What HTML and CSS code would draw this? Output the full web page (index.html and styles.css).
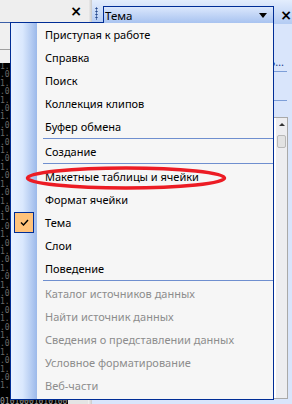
FILE: index.html
```html
<!DOCTYPE html>
<html lang="ru">
<head>
  <meta charset="UTF-8" />
  <title>Тема</title>
  <link rel="stylesheet" href="styles.css">
</head>
<body>
  <div class="screen">
    <div class="pane-left">
      <div class="pane-head"><span class="close">×</span></div>
      <div class="pane-tools"></div>
      <div class="pane-work">
        <div class="binary">
          <div class="bits">1.0
.01
1.0
.01
1.0
.01
1.0
.01
1.0
.01
1.0
.01
1.0
.01
1.0
.01
1.0
.01
1.0
.01
1.0
.01
1.0
.01
1.0
.01
1.0
.01
1.0
.01
1.0
.01
1.0
.01
1.0
.01
1.0
.01
1.0</div>
          <div class="bits-row">0101000101010001010000</div>
        </div>
        <div class="work-side"></div>
      </div>
    </div>

    <div class="splitter"></div>

    <div class="pane-right">
      <div class="task-head">
        <span class="grip"></span>
        <div class="combo">
          <span class="combo-text">Тема</span>
          <span class="combo-arrow"></span>
        </div>
        <span class="close">×</span>
      </div>
      <div class="task-body">
        <div class="task-link">Применить…</div>
        <div class="task-rule"></div>
        <div class="task-rule second"></div>
        <div class="theme-list">
          <div class="theme-preview"></div>
          <div class="scrollbar">
            <span class="scroll-up"></span>
            <span class="scroll-thumb"></span>
          </div>
        </div>
      </div>
    </div>

    <div class="menu">
      <div class="item"><span class="gutter"></span><span class="label">Приступая к работе</span></div>
      <div class="item"><span class="gutter"></span><span class="label">Справка</span></div>
      <div class="item"><span class="gutter"></span><span class="label">Поиск</span></div>
      <div class="item"><span class="gutter"></span><span class="label">Коллекция клипов</span></div>
      <div class="item"><span class="gutter"></span><span class="label">Буфер обмена</span></div>
      <div class="sep"></div>
      <div class="item"><span class="gutter"></span><span class="label">Создание</span></div>
      <div class="sep"></div>
      <div class="item"><span class="gutter"></span><span class="label">Макетные таблицы и ячейки</span></div>
      <div class="item"><span class="gutter"></span><span class="label">Формат ячейки</span></div>
      <div class="item"><span class="gutter"><span class="check">
        <svg width="9" height="7" viewBox="0 0 9 7"><path d="M1 3.5 L3.5 6 L8 1" fill="none" stroke="#000" stroke-width="1.4"/></svg>
      </span></span><span class="label">Тема</span></div>
      <div class="item"><span class="gutter"></span><span class="label">Слои</span></div>
      <div class="item"><span class="gutter"></span><span class="label">Поведение</span></div>
      <div class="sep"></div>
      <div class="item disabled"><span class="gutter"></span><span class="label">Каталог источников данных</span></div>
      <div class="item disabled"><span class="gutter"></span><span class="label">Найти источник данных</span></div>
      <div class="item disabled"><span class="gutter"></span><span class="label">Сведения о представлении данных</span></div>
      <div class="item disabled"><span class="gutter"></span><span class="label">Условное форматирование</span></div>
      <div class="item disabled"><span class="gutter"></span><span class="label">Веб-части</span></div>
    </div>

    <svg class="highlight" width="216" height="30" viewBox="0 0 216 30">
      <ellipse cx="108" cy="15" rx="98.5" ry="10" fill="none" stroke="#ec1c24" stroke-width="3.5"/>
    </svg>
  </div>
</body>
</html>
```

FILE: styles.css
```css
* {
  margin: 0;
  padding: 0;
  box-sizing: border-box;
}

body {
  font-family: "Noto Sans", "Liberation Sans", sans-serif;
  font-size: 11px;
  background: #d9e5fb;
}

.screen {
  position: relative;
  width: 292px;
  height: 404px;
  overflow: hidden;
  display: grid;
  grid-template-columns: 88px 4px 200px;
}

/* left pane */
.pane-left {
  display: flex;
  flex-direction: column;
  background: #f0f0f0;
}

.pane-head {
  height: 23px;
  display: flex;
  justify-content: flex-end;
  align-items: center;
  padding-right: 6px;
  border-bottom: 1px solid #3b5fa8;
  background: #eeeeee;
}

.close {
  font-family: "DejaVu Sans", sans-serif;
  font-size: 14px;
  font-weight: bold;
  line-height: 1;
  color: #000;
}

.pane-tools {
  height: 40px;
  background: linear-gradient(#f0f0f0 0 26px, #a0a0a0 26px 27px, #f0f0f0 27px);
}

.pane-work {
  flex: 1;
  display: flex;
  overflow: hidden;
}

.binary {
  width: 68px;
  display: flex;
  flex-direction: column;
  justify-content: space-between;
  background: #000;
  color: #6a6a6a;
  font-family: "DejaVu Sans Mono", monospace;
  font-size: 8px;
  line-height: 8.4px;
  white-space: pre;
  overflow: hidden;
}

.bits-row {
  height: 6px;
  line-height: 8px;
  color: #9a9a9a;
}

.work-side {
  flex: 1;
  background: #e4e4e4;
}

.splitter {
  background: linear-gradient(to right, #f4f4f4, #c9c9c9);
}

/* right pane */
.pane-right {
  display: flex;
  flex-direction: column;
  background: #d9e5fb;
}

.task-head {
  height: 24px;
  display: flex;
  align-items: flex-start;
  background: linear-gradient(#e3edfd, #b3cbf3);
}

.grip {
  width: 3px;
  height: 13px;
  margin: 7px 0 0 3px;
  background: radial-gradient(circle, #274a8e 0.9px, transparent 1.2px) 0 0 / 3px 3px;
}

.combo {
  position: relative;
  z-index: 3;
  width: 174px;
  height: 17px;
  margin: 6px 0 0 5px;
  padding: 0 4px 0 1px;
  display: flex;
  align-items: center;
  justify-content: space-between;
  border: 1px solid #002d96;
  border-bottom: none;
  background: linear-gradient(#dbe7fc, #a8c3f0);
}

.combo-text {
  font-size: 11.5px;
  color: #000;
}

.combo-arrow {
  width: 0;
  height: 0;
  margin-right: 2px;
  border-left: 4.5px solid transparent;
  border-right: 4.5px solid transparent;
  border-top: 5px solid #000;
}

.task-head .close {
  margin: 8px 0 0 6px;
}

.task-body {
  flex: 1;
  display: flex;
  flex-direction: column;
  padding: 0 5px 0 8px;
}

.task-link {
  margin: 32px 3px 0 0;
  text-align: right;
  color: #1f3f8f;
  font-size: 11px;
  line-height: 12px;
}

.task-rule {
  height: 1px;
  margin-top: 3px;
  background: #7d9ed8;
}

.task-rule.second {
  margin-top: 28px;
}

.theme-list {
  flex: 1;
  display: flex;
  margin: 16px -1px 5px 0;
  border: 1px solid #a9a9a9;
  background: #fff;
}

.theme-preview {
  flex: 1;
}

.scrollbar {
  width: 11px;
  display: flex;
  flex-direction: column;
  align-items: center;
  background: #ededf0;
}

.scroll-up {
  width: 0;
  height: 0;
  margin-top: 5px;
  border-left: 3px solid transparent;
  border-right: 3px solid transparent;
  border-bottom: 3px solid #333;
}

.scroll-thumb {
  width: 9px;
  height: 13px;
  margin-top: 9px;
  border: 1px solid #b9b9b9;
  border-radius: 2px;
  background: #e2e2e2;
}

/* dropdown menu */
.menu {
  position: absolute;
  z-index: 2;
  left: 10px;
  top: 22px;
  width: 264px;
  height: 378px;
  border: 1px solid #002d96;
  background: #f6f6f6 linear-gradient(to right, #e8f1ff 0%, #dae8fd 45%, #9cb9ea 100%) 0 0 / 26px 100% no-repeat;
}

.item {
  height: 23px;
  display: flex;
  align-items: center;
}

.gutter {
  width: 26px;
  height: 100%;
  display: flex;
  align-items: center;
}

.check {
  width: 20px;
  height: 21px;
  margin-left: 3px;
  display: flex;
  align-items: center;
  justify-content: center;
  border: 1px solid #002d96;
  background: #ffc27a;
}

.label {
  padding-left: 8px;
  color: #000;
  white-space: nowrap;
}

.item.disabled .label {
  color: #8d8d8d;
}

.sep {
  height: 2px;
  margin-left: 32px;
  border-top: 1px solid #6f8fcf;
}

.highlight {
  position: absolute;
  z-index: 4;
  left: 18px;
  top: 163px;
}
```
